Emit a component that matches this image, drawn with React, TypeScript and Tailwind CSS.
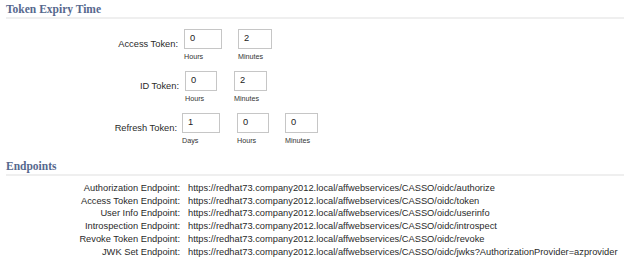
type Field = { value: string; caption: string; w: number; ml: number };
type TokenRowData = { label: string; labelW: number; fields: Field[] };

const rows: TokenRowData[] = [
  {
    label: "Access Token:",
    labelW: 178,
    fields: [
      { value: "0", caption: "Hours", w: 38, ml: 6 },
      { value: "2", caption: "Minutes", w: 34, ml: 16 },
    ],
  },
  {
    label: "ID Token:",
    labelW: 179,
    fields: [
      { value: "0", caption: "Hours", w: 32, ml: 6 },
      { value: "2", caption: "Minutes", w: 33, ml: 17 },
    ],
  },
  {
    label: "Refresh Token:",
    labelW: 177,
    fields: [
      { value: "1", caption: "Days", w: 38, ml: 5 },
      { value: "0", caption: "Hours", w: 32, ml: 17 },
      { value: "0", caption: "Minutes", w: 33, ml: 16 },
    ],
  },
];

const base = "https://redhat73.company2012.local/affwebservices/CASSO/oidc/";

const endpoints = [
  ["Authorization Endpoint:", base + "authorize"],
  ["Access Token Endpoint:", base + "token"],
  ["User Info Endpoint:", base + "userinfo"],
  ["Introspection Endpoint:", base + "introspect"],
  ["Revoke Token Endpoint:", base + "revoke"],
  ["JWK Set Endpoint:", base + "jwks?AuthorizationProvider=azprovider"],
];

function SectionHeading({ title }: { title: string }) {
  return (
    <div className="pl-[6px]">
      <div className="text-[11.5px] leading-[14px] font-bold text-[#56688e] font-['Liberation_Serif',serif]">
        {title}
      </div>
      <div className="mt-[1px] h-[2px] bg-[#efefef]" />
    </div>
  );
}

function TokenRow({ row }: { row: TokenRowData }) {
  return (
    <div className="flex items-center">
      <div
        className="text-right text-[9.3px] text-[#2a2a2a] shrink-0"
        style={{ width: row.labelW }}
      >
        {row.label}
      </div>
      {row.fields.map((f, i) => (
        <div key={i} className="flex flex-col" style={{ marginLeft: f.ml }}>
          <div
            className="h-[20px] border border-[#c6c6c6] bg-white pl-[5px] flex items-center text-[9.3px] text-[#222]"
            style={{ width: f.w }}
          >
            {f.value}
          </div>
          <div className="mt-[3px] text-[7.2px] leading-[9px] text-[#333]">
            {f.caption}
          </div>
        </div>
      ))}
    </div>
  );
}

export default function App() {
  return (
    <div className="w-[624px] h-[264px] overflow-hidden bg-white font-['Liberation_Sans',Arial,sans-serif] pt-[2px]">
      <SectionHeading title="Token Expiry Time" />

      <div className="mt-[10px] flex flex-col gap-[10px]">
        {rows.map((r) => (
          <TokenRow key={r.label} row={r} />
        ))}
      </div>

      <div className="mt-[14px]">
        <SectionHeading title="Endpoints" />
      </div>

      <div className="mt-[6px] flex flex-col">
        {endpoints.map(([label, url]) => (
          <div key={label} className="flex text-[9.3px] leading-[12.7px] text-[#2a2a2a]">
            <div className="w-[180px] shrink-0 text-right">{label}</div>
            <div className="ml-[8px] whitespace-nowrap">{url}</div>
          </div>
        ))}
      </div>
    </div>
  );
}
